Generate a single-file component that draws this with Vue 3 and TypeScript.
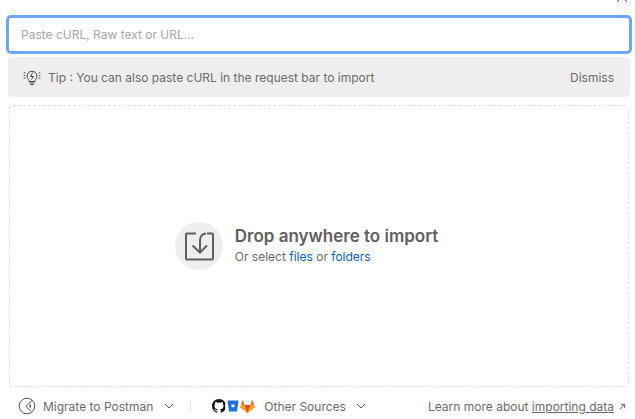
<script setup lang="ts">
const title: string = 'Drop anywhere to import'
</script>

<template>
  <div class="page">
    <svg class="close" width="12" height="12" viewBox="0 0 12 12" fill="none" stroke="#5a5a5a" stroke-width="1"><path d="M1 1l10 10M11 1L1 11" /></svg>
    <div class="input">Paste cURL, Raw text or URL...</div>
    <div class="tip">
      <svg class="bulb" width="18" height="18" viewBox="0 0 18 18" fill="none" stroke="#444" stroke-width="1">
        <path d="M6 12.2C4.800 11.200 4.200 10 4.200 8A4.800 4.800 0 0 1 13.800 8c0 2-.6 3.200-1.800 4.200v1.300H6z" />
        <path d="M9.700 4.500L7.600 8.500h2.800l-2 3" />
        <path d="M6.600 15h4.800M7.400 16.600h3.200" />
        <path d="M.8 4.500l1.600.8M.6 7.600h1.700M.8 10.600l1.600-.8M17.200 4.500l-1.600.8M17.400 7.600h-1.700M17.200 10.600l-1.600-.8" />
      </svg>
      <span class="tip-text">Tip : You can also paste cURL in the request bar to import</span>
      <span class="dismiss">Dismiss</span>
    </div>
    <div class="drop">
      <div class="circle">
        <svg width="30" height="30" viewBox="0 0 30 30" fill="none" stroke="#5f5f5f" stroke-width="2">
          <path d="M12 2.500H3a1 1 0 0 0-1 1v24a1 1 0 0 0 1 1h25a1 1 0 0 0 1-1v-24a1 1 0 0 0-1-1h-5" />
          <path d="M22 2.500c-4 .5-6 3-6 7v12" />
          <path d="M8.500 14.500l7.500 7 7-7" />
        </svg>
      </div>
      <div class="drop-text">
        <div class="title">{{ title }}</div>
        <div class="sub">Or select <a>files</a> or <a>folders</a></div>
      </div>
    </div>
    <div class="footer">
      <div class="left">
        <svg width="18" height="18" viewBox="0 0 18 18" fill="none" stroke="#555" stroke-width="1">
          <circle cx="9" cy="9" r="7.800" />
          <path d="M14.200 3.500L7.800 9.200l5.400 5.300" />
          <path d="M12.300 7.500v3.200" stroke-width="1.500" />
        </svg>
        <span class="label">Migrate to Postman</span>
        <svg class="chev first" width="10" height="6" viewBox="0 0 10 6" fill="none" stroke="#555" stroke-width="1"><path d="M1 1l4 4 4-4" /></svg>
        <span class="sep"></span>
        <div class="logos">
          <span class="logo">
            <svg width="14" height="14" viewBox="0 0 16 16" fill="#161616"><path d="M8 0C3.580 0 0 3.580 0 8c0 3.540 2.290 6.530 5.470 7.590.4.070.55-.17.55-.38v-1.340c-2.230.48-2.690-1.080-2.690-1.080-.36-.92-.89-1.170-.89-1.170-.73-.5.050-.49.050-.49.800.060 1.230.830 1.230.830.710 1.220 1.870.870 2.330.660.070-.520.280-.870.510-1.070-1.780-.200-3.640-.890-3.640-3.950 0-.870.310-1.590.820-2.150-.080-.200-.360-1.020.080-2.120 0 0 .670-.210 2.200.820a7.600 7.600 0 0 1 4 0c1.530-1.040 2.200-.820 2.200-.820.440 1.100.160 1.920.080 2.120.510.560.820 1.270.820 2.150 0 3.070-1.870 3.750-3.650 3.950.290.250.540.730.540 1.480v2.200c0 .210.150.460.550.380A8.010 8.010 0 0 0 16 8c0-4.420-3.580-8-8-8z" /></svg>
          </span>
          <span class="logo">
            <svg width="12" height="12" viewBox="0 0 12 12"><path d="M.5 .5h11l-1.500 11H2z" fill="#1f6fe8" /><path d="M4.300 4.500h3.400l-.4 2.800H4.700z" fill="#fff" /></svg>
          </span>
          <span class="logo">
            <svg width="15" height="14" viewBox="0 0 16 15"><path d="M8 15L.300 9.200 1 6.500 3 .500l2 6h6l2-6 2 6 .700 2.700z" fill="#fc6d26" /><path d="M8 15L5 6.500h6z" fill="#e24329" /><path d="M8 15L.300 9.200 1 6.500h4zM8 15l7.700-5.800-.700-2.700h-4z" fill="#fca326" /></svg>
          </span>
        </div>
        <span class="label">Other Sources</span>
        <svg class="chev" width="10" height="6" viewBox="0 0 10 6" fill="none" stroke="#555" stroke-width="1"><path d="M1 1l4 4 4-4" /></svg>
      </div>
      <div class="right">
        <span>Learn more about <u>importing data</u></span>
        <svg width="7" height="7" viewBox="0 0 8 8" fill="none" stroke="#555" stroke-width="1"><path d="M1 7l5.500-5.500M2 1.500h4.500V6" /></svg>
      </div>
    </div>
  </div>
</template>

<style>
html, body { margin: 0; background: #fff; overflow: hidden; }
</style>

<style scoped>
.page {
  position: relative;
  width: 635px;
  height: 419px;
  box-sizing: border-box;
  padding: 15px 3px 0 6px;
  display: flex;
  flex-direction: column;
  font-family: Inter, "Noto Sans", sans-serif;
  font-size: 12px;
  color: #6b6b6b;
  overflow: hidden;
}
.close { position: absolute; right: 7px; top: -9px; }
.input {
  height: 39px;
  box-sizing: border-box;
  border: 3px solid #6ca6f5;
  border-radius: 5px;
  padding: 0 12px;
  line-height: 33px;
  color: #a6a6a6;
  flex: none;
}
.tip {
  margin: 3px 2px 0;
  height: 40px;
  flex: none;
  background: #eeeeee;
  border-radius: 4px;
  display: flex;
  align-items: center;
  padding: 0 16px 0 15px;
}
.bulb { margin-right: 7px; }
.tip-text { flex: 1; }
.drop {
  margin: 8px 3px 0;
  height: 282px;
  flex: none;
  box-sizing: border-box;
  border: 1px dashed #dedede;
  border-radius: 4px;
  display: flex;
  align-items: center;
  justify-content: center;
  gap: 12px;
  padding: 0 25px 0 0;
}
.circle {
  width: 48px;
  height: 48px;
  border-radius: 50%;
  background: #eeeeee;
  display: flex;
  align-items: center;
  justify-content: center;
}
.drop-text { margin-bottom: 2px; }
.title { font-size: 17px; font-weight: 600; line-height: 20px; color: #5f5f5f; }
.sub { line-height: 16px; margin-top: 3px; }
.sub a { color: #0b5fd1; }
.footer {
  margin: 9px 6px 0 12px;
  display: flex;
  align-items: center;
  justify-content: space-between;
  height: 20px;
}
.left { display: flex; align-items: center; }
.label { margin-left: 7px; }
.chev { margin-left: 10px; }
.chev.first { margin-left: 11px; }
.sep { width: 1px; height: 13px; background: #e3e3e3; margin: 0 20px 0 16px; }
.logos { display: flex; align-items: center; }
.logo {
  width: 16px;
  height: 16px;
  border-radius: 50%;
  background: #fff;
  display: flex;
  align-items: center;
  justify-content: center;
  margin-right: -2px;
}
.logos + .label { margin-left: 11px; }
.right { display: flex; align-items: center; gap: 5px; }
</style>
